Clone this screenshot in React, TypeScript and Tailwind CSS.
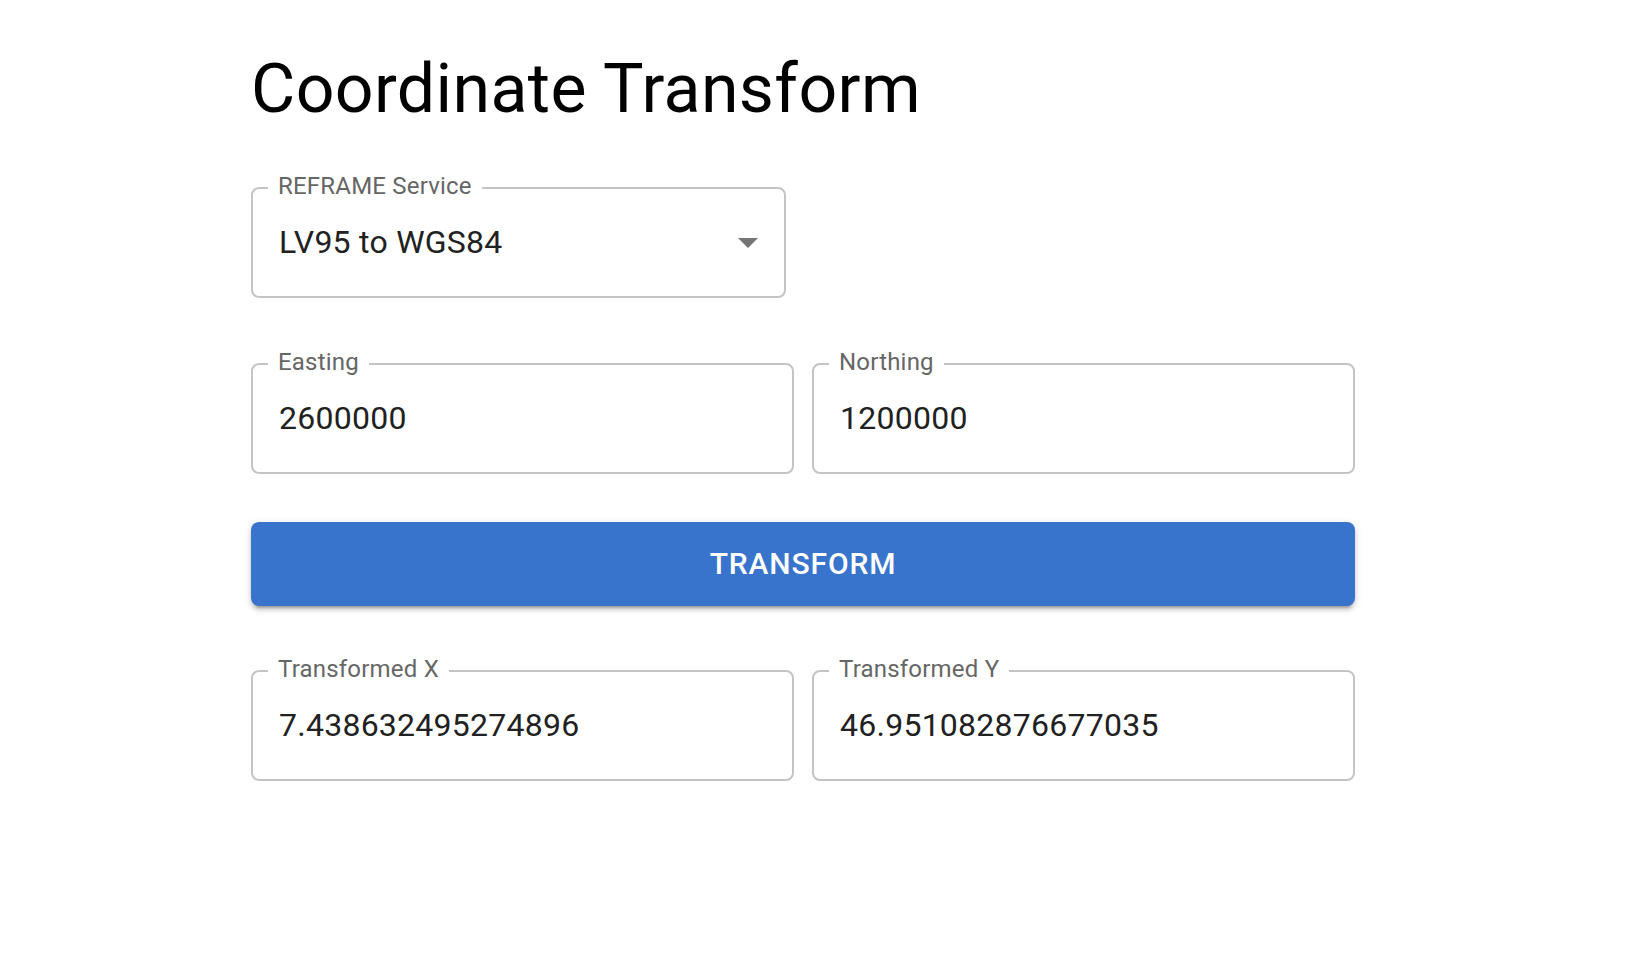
import React from "react";

function Field({
  label,
  value,
  select,
  className,
}: {
  label: string;
  value: string;
  select?: boolean;
  className?: string;
}) {
  return (
    <div className={"relative h-[111px] " + (className ?? "")}>
      <div className="absolute inset-0 rounded-[8px] border-2 border-[#c4c4c4]" />
      <span className="absolute left-[17px] top-[-17px] bg-white px-[10px] text-[24px] leading-[32px] text-[#666666] tracking-[0.2px]">
        {label}
      </span>
      <div className="relative flex h-full items-center pb-[2px] pl-[28px] pr-[14px]">
        <span className="flex-1 text-[32px] leading-[46px] text-[#212121] tracking-[0.25px]">
          {value}
        </span>
        {select && (
          <svg
            viewBox="0 0 24 24"
            className="h-[48px] w-[48px] fill-[#757575]"
            aria-hidden="true"
          >
            <path d="M7 10l5 5 5-5z" />
          </svg>
        )}
      </div>
    </div>
  );
}

export default function App() {
  return (
    <div
      className="min-h-screen bg-white"
      style={{ fontFamily: "Roboto, 'Noto Sans', Arial, sans-serif" }}
    >
      <div className="ml-[251px] w-[1104px] pt-[47px]">
        <h1 className="text-[68px] leading-[84px] font-normal tracking-[0.4px] text-black">
          Coordinate Transform
        </h1>
        <div className="mt-[56px] w-[535px]">
          <Field label="REFRAME Service" value="LV95 to WGS84" select />
        </div>
        <div className="mt-[65px] flex gap-[18px]">
          <Field label="Easting" value="2600000" className="flex-1" />
          <Field label="Northing" value="1200000" className="flex-1" />
        </div>
        <button className="mt-[48px] flex h-[84px] w-full items-center justify-center rounded-[8px] bg-[#3874cb] pb-[1px] text-[30px] font-medium uppercase tracking-[0.86px] text-white shadow-[0_6px_2px_-4px_rgba(0,0,0,0.2),0_4px_4px_0_rgba(0,0,0,0.14),0_2px_10px_0_rgba(0,0,0,0.12)]">
          Transform
        </button>
        <div className="mt-[64px] flex gap-[18px]">
          <Field label="Transformed X" value="7.438632495274896" className="flex-1" />
          <Field label="Transformed Y" value="46.951082876677035" className="flex-1" />
        </div>
      </div>
    </div>
  );
}
